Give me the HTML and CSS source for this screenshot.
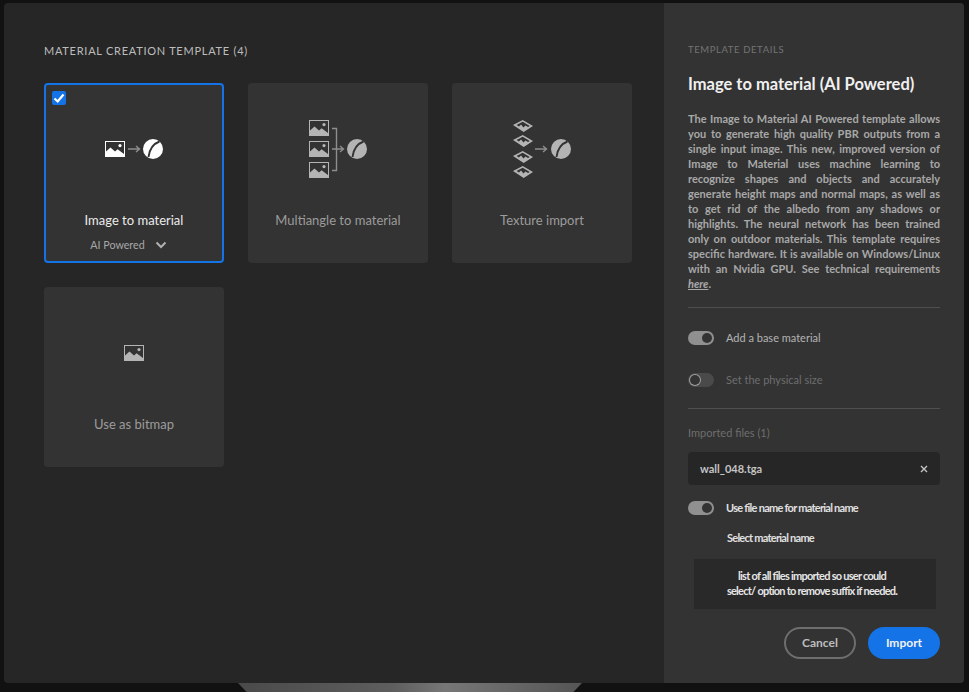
FILE: index.html
```html
<!DOCTYPE html>
<html lang="en">
<head>
<meta charset="utf-8">
<title>Material creation template</title>
<link rel="stylesheet" href="styles.css">
</head>
<body>
<svg class="defs" width="0" height="0" aria-hidden="true">
  <defs>
    <symbol id="pic" viewBox="0 0 20 16">
      <path fill="currentColor" fill-rule="evenodd" d="M0 0h20v16H0zM1 1v9.500l4.500-4 4.500 4 2.600-2.200L19 13V1z"/>
      <circle cx="15" cy="4.600" r="1.600" fill="currentColor"/>
    </symbol>
    <symbol id="ball" viewBox="0 0 20 20">
      <circle cx="10" cy="10" r="10" fill="currentColor"/>
      <path class="slash" d="M16.500 2.500C11 4.500 6.500 10 5.500 18"/>
    </symbol>
    <symbol id="tile" viewBox="0 0 20 12">
      <path fill="currentColor" fill-rule="evenodd" d="M0 5 9.700 0 20 6 10.700 12zM3.500 4.900 9.700 1.700 16.800 5.900 15 7 12.500 5.500 10.500 7.500 8 4.500 6 6.500z"/>
    </symbol>
  </defs>
</svg>
<div class="backdrop-shape"></div>
<main class="dialog">
  <section class="templates">
    <h2 class="heading">MATERIAL CREATION TEMPLATE (4)</h2>
    <div class="grid">
      <article class="card selected">
        <span class="check"><svg viewBox="0 0 14 14" width="14" height="14"><path d="M2.500 7.500 5.700 10.500 11.500 3.500" fill="none" stroke="#fff" stroke-width="2.200"/></svg></span>
        <svg class="art" viewBox="0 0 176 60">
          <use href="#pic" x="59" y="22" width="20" height="16"/>
          <path class="arrow" d="M82 30h11M90 27l3.500 3-3.500 3"/>
          <use href="#ball" x="97" y="20" width="20" height="20"/>
        </svg>
        <div class="label">Image to material</div>
        <div class="sub">AI Powered
          <svg class="chev" viewBox="0 0 12 8" width="12" height="8"><path d="M1.500 1.500 6 6l4.500-4.500" fill="none" stroke="currentColor" stroke-width="2"/></svg>
        </div>
      </article>
      <article class="card">
        <svg class="art" viewBox="0 0 176 60">
          <use href="#pic" x="59" y="1" width="20" height="16"/>
          <use href="#pic" x="59" y="22" width="20" height="16"/>
          <use href="#pic" x="59" y="43" width="20" height="16"/>
          <path class="arrow" d="M82 9.500h4.500v42H82M82 30h11M90 27l3.500 3-3.500 3"/>
          <use href="#ball" x="97" y="20" width="20" height="20"/>
        </svg>
        <div class="label">Multiangle to material</div>
      </article>
      <article class="card">
        <svg class="art" viewBox="0 0 176 60">
          <use href="#tile" x="59" y="1" width="20" height="12"/>
          <use href="#tile" x="59" y="16" width="20" height="12"/>
          <use href="#tile" x="59" y="32" width="20" height="12"/>
          <use href="#tile" x="59" y="47" width="20" height="12"/>
          <path class="arrow" d="M81 30h11M89 27l3.500 3-3.500 3"/>
          <use href="#ball" x="97" y="20" width="20" height="20"/>
        </svg>
        <div class="label">Texture import</div>
      </article>
      <article class="card">
        <svg class="art" viewBox="0 0 176 60">
          <use href="#pic" x="78" y="22" width="20" height="16"/>
        </svg>
        <div class="label">Use as bitmap</div>
      </article>
    </div>
  </section>
  <aside class="details">
    <div class="eyebrow">TEMPLATE DETAILS</div>
    <h1 class="title">Image to material (AI Powered)</h1>
    <p class="desc">The Image to Material AI Powered template allows you to generate high quality PBR outputs from a single input image. This new, improved version of Image to Material uses machine learning to recognize shapes and objects and accurately generate height maps and normal maps, as well as to get rid of the albedo from any shadows or highlights. The neural network has been trained only on outdoor materials. This template requires specific hardware. It is available on Windows/Linux with an Nvidia GPU. See technical requirements <a class="link">here</a>.</p>
    <hr class="rule first">
    <div class="opt base"><span class="toggle on"></span><span>Add a base material</span></div>
    <div class="opt size"><span class="toggle"></span><span>Set the physical size</span></div>
    <hr class="rule second">
    <div class="files-label">Imported files (1)</div>
    <div class="file"><span>wall_048.tga</span><svg viewBox="0 0 8 8" width="8" height="8"><path d="M1 1l6 6M7 1 1 7" stroke="currentColor" stroke-width="1.400" fill="none"/></svg></div>
    <div class="opt use"><span class="toggle on"></span><span>Use file name for material name</span></div>
    <div class="select-label">Select material name</div>
    <div class="note">list of all files imported so user could<br>select/ option to remove suffix if needed.</div>
    <div class="actions">
      <button class="btn cancel">Cancel</button>
      <button class="btn import">Import</button>
    </div>
  </aside>
</main>
</body>
</html>
```
FILE: styles.css
```css
* { box-sizing: border-box; }
html, body { margin: 0; height: 100%; }
body {
  background: #111;
  font-family: "Lato", "Open Sans", sans-serif;
  padding: 3px 5px 9px 4px;
  overflow: hidden;
  position: relative;
}
.defs { position: absolute; }
.backdrop-shape {
  position: absolute;
  left: 238px;
  top: 683px;
  width: 344px;
  height: 9px;
  background: linear-gradient(90deg, #4a4a4a, #5e5e5e 45%, #777 60%, #555);
  clip-path: polygon(0 0, 100% 0, 97.500% 100%, 2.500% 100%);
}
.dialog {
  position: relative;
  display: flex;
  width: 960px;
  height: 680px;
  background: #262626;
  border-radius: 4px;
  overflow: hidden;
}
.templates { width: 660px; padding: 41px 32px 0 40px; }
.heading {
  margin: 0 0 26px;
  font-size: 11px;
  line-height: 13px;
  font-weight: 400;
  letter-spacing: 0.74px;
  color: #bdbdbd;
}
.grid { display: grid; grid-template-columns: repeat(3, 180px); gap: 24px; }
.card {
  position: relative;
  height: 180px;
  background: #333;
  border: 2px solid transparent;
  border-radius: 4px;
  padding-top: 34px;
  color: #b4b4b4;
}
.card.selected { border-color: #1473e6; color: #fff; }
.art { display: block; width: 176px; height: 60px; }
.arrow { fill: none; stroke: #8e8e8e; stroke-width: 1.400; }
.slash { fill: none; stroke: #333; stroke-width: 1.900; }
.label {
  margin-top: 31px;
  font-size: 13px;
  line-height: 20px;
  text-align: center;
  color: #9c9c9c;
}
.selected .label { color: #ececec; }
.sub {
  margin-top: 8px;
  padding-right: 11px;
  font-size: 10.700px;
  line-height: 14px;
  color: #a8a8a8;
  display: flex;
  justify-content: center;
  align-items: center;
  gap: 8px;
}
.chev { margin-left: 2px; color: #b0b0b0; }
.check {
  position: absolute;
  left: 6px;
  top: 6px;
  width: 14px;
  height: 14px;
  background: #1473e6;
  border-radius: 2px;
  display: block;
}
.check svg { display: block; }
.details {
  width: 300px;
  background: #333;
  padding: 41px 24px 0;
  color: #b9b9b9;
}
.eyebrow {
  font-size: 9.500px;
  line-height: 12px;
  letter-spacing: 0.6px;
  color: #737373;
}
.title {
  margin: 15px 0 14px;
  font-size: 16.500px;
  line-height: 26px;
  font-weight: 700;
  color: #f0f0f0;
}
.desc {
  margin: 0;
  font-size: 11px;
  line-height: 15px;
  font-weight: 700;
  text-align: justify;
  color: #a8a8a8;
}
.link { text-decoration: underline; font-style: italic; }
.rule { border: 0; height: 1px; margin: 0; background: #4f4f4f; }
.rule.first { margin-top: 16px; }
.rule.second { margin-top: 21px; }
.opt {
  display: flex;
  align-items: center;
  gap: 12px;
  height: 14px;
  font-size: 11px;
  line-height: 14px;
}
.opt.base { margin-top: 23px; color: #b4b4b4; }
.opt.size { margin-top: 28px; color: #6e6e6e; }
.opt.use {
  margin-top: 16px;
  color: #e0e0e0;
  font-weight: 700;
  letter-spacing: -0.74px;
}
.toggle {
  position: relative;
  width: 26px;
  height: 14px;
  border-radius: 7px;
  background: #4a4a4a;
  flex: none;
}
.toggle::after {
  content: "";
  position: absolute;
  top: 2px;
  left: 2px;
  width: 10px;
  height: 10px;
  border-radius: 50%;
  background: #333;
  box-shadow: 0 0 0 1px #a0a0a0;
}
.toggle.on { background: #909090; }
.toggle.on::after { left: 14px; box-shadow: none; }
.files-label {
  margin-top: 17px;
  font-size: 11px;
  line-height: 14px;
  color: #6e6e6e;
}
.file {
  margin-top: 12px;
  height: 33px;
  border-radius: 4px;
  background: #262626;
  display: flex;
  align-items: center;
  justify-content: space-between;
  padding: 0 12px;
  font-size: 11px;
  font-weight: 700;
  color: #c4c4c4;
}
.select-label {
  margin: 16px 0 0 39px;
  font-size: 11px;
  line-height: 14px;
  font-weight: 700;
  letter-spacing: -0.75px;
  color: #e0e0e0;
}
.note {
  margin: 14px 4px 0 6px;
  height: 50px;
  padding: 9px 6px 0 0;
  background: #292929;
  font-size: 11px;
  line-height: 15px;
  font-weight: 700;
  letter-spacing: -0.75px;
  text-align: center;
  color: #e6e6e6;
}
.actions { margin-top: 18px; display: flex; justify-content: flex-end; gap: 12px; }
.btn {
  width: 72px;
  height: 32px;
  border-radius: 16px;
  font: 700 12px/1 "Lato", sans-serif;
  padding: 0;
}
.cancel { background: transparent; border: 2px solid #6e6e6e; color: #bdbdbd; }
.import { background: #1473e6; border: 0; color: #f2f2f2; }
```
